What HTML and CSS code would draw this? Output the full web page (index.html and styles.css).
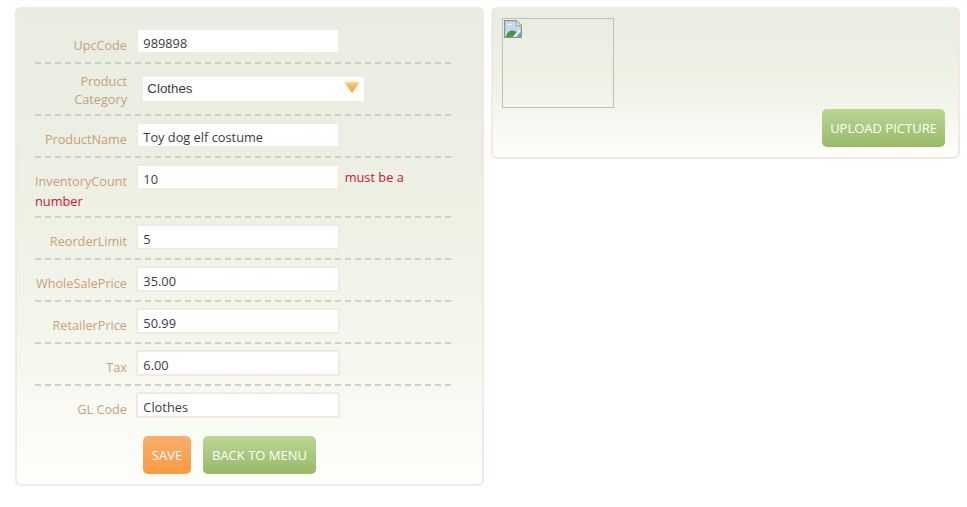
FILE: index.html
```html
<!DOCTYPE html>
<html lang="en">
<head>
  <meta charset="UTF-8">
  <title>Edit Product</title>
  <link rel="stylesheet" href="styles.css">
</head>
<body>
  <div class="page">
    <!-- product form -->
    <form class="panel form-panel">
      <div class="row">
        <label class="row-label">UpcCode</label>
        <input class="text-input" type="text" value="989898">
      </div>
      <div class="row row-select">
        <label class="row-label">Product Category</label>
        <span class="select-wrap">
          <select class="select-input">
            <option>Clothes</option>
          </select>
          <svg class="select-arrow" width="16" height="11" viewBox="0 0 16 11">
            <defs>
              <linearGradient id="arrowFill" x1="0" y1="0" x2="0" y2="1">
                <stop offset="0" stop-color="#f8dc8c"/>
                <stop offset="0.3" stop-color="#fbbf63"/>
                <stop offset="1" stop-color="#f99a41"/>
              </linearGradient>
            </defs>
            <path d="M0 0H16L8 11Z" fill="url(#arrowFill)"/>
          </svg>
        </span>
      </div>
      <div class="row">
        <label class="row-label">ProductName</label>
        <input class="text-input" type="text" value="Toy dog elf costume">
      </div>
      <div class="row">
        <label class="row-label">InventoryCount</label>
        <input class="text-input" type="text" value="10">
        <span class="field-error">must be a number</span>
      </div>
      <div class="row">
        <label class="row-label">ReorderLimit</label>
        <input class="text-input" type="text" value="5">
      </div>
      <div class="row">
        <label class="row-label">WholeSalePrice</label>
        <input class="text-input" type="text" value="35.00">
      </div>
      <div class="row">
        <label class="row-label">RetailerPrice</label>
        <input class="text-input" type="text" value="50.99">
      </div>
      <div class="row">
        <label class="row-label">Tax</label>
        <input class="text-input" type="text" value="6.00">
      </div>
      <div class="row row-last">
        <label class="row-label">GL Code</label>
        <input class="text-input" type="text" value="Clothes">
      </div>
      <div class="form-actions">
        <button class="btn btn-orange btn-save" type="button">SAVE</button>
        <button class="btn btn-green btn-back" type="button">BACK TO MENU</button>
      </div>
    </form>

    <!-- picture -->
    <div class="panel picture-panel">
      <div class="picture-box">
        <svg class="broken-image" width="18" height="18" viewBox="0 0 16 16">
          <path d="M.5.5H11L15.500 5V15.500H.5Z" fill="#c9d7f3" stroke="#8f8f8f"/>
          <path d="M11 .5V5H15.500Z" fill="#f4f4f4" stroke="#a8a8a8"/>
          <path d="M3 4.500Q5 2 7.500 4.500Z" fill="#fff"/>
          <path d="M1.500 15Q3 10 7 9L11.500 10.500L8 15Z" fill="#3f9e3a"/>
          <path d="M8 15L14 8.500V10L10 15Z" fill="#fff"/>
          <path d="M11 15L15 10.500V15Z" fill="#7f9f80"/>
        </svg>
      </div>
      <div class="picture-actions">
        <button class="btn btn-green btn-upload" type="button">UPLOAD PICTURE</button>
      </div>
    </div>
  </div>
</body>
</html>
```

FILE: styles.css
```css
/* base */
body {
  margin: 0;
  padding: 7px 7px 0 15px;
  background-color: #fff;
  font-family: "Open Sans", sans-serif;
  font-size: 12.8px;
  color: #333;
}
.page {
  display: flex;
  align-items: flex-start;
  gap: 7px;
}
/* panels */
.panel {
  box-sizing: border-box;
  width: 469px;
  border: 2px solid #f3e9e0;
  border-radius: 6px;
  background: linear-gradient(to bottom, #e8ece2 0%, #eef1e4 45%, #f3f6ec 68%, #fefefb 100%);
}
.form-panel {
  height: 479px;
  padding: 14px 31px 0 18px;
}
.picture-panel {
  height: 152px;
  padding: 9px 13px 0 9px;
}
/* form rows */
.row {
  padding: 6px 0 8px;
  border-bottom: 2px dashed #d3cfc6;
  line-height: 18px;
}
.row:first-child {
  padding-top: 5px;
}
.row-select {
  padding: 7px 0;
}
.row-last {
  border-bottom: none;
  padding-bottom: 0;
}
.row-label {
  display: inline-block;
  position: relative;
  top: 6px;
  width: 92px;
  margin-right: 6px;
  text-align: right;
  font-size: 12.7px;
  color: #c99f76;
}
.row-select .row-label {
  top: 1px;
  vertical-align: middle;
}
.text-input {
  box-sizing: border-box;
  width: 204px;
  height: 26px;
  padding: 4px 5px 0;
  border: 2px solid #f3e9e0;
  border-radius: 2px;
  background-color: #fff;
  font-family: "Open Sans", sans-serif;
  font-size: 12.8px;
  color: #3c3c3c;
  vertical-align: middle;
}
.field-error {
  position: relative;
  top: 2px;
  margin-left: 1px;
  color: #d4122e;
}
/* select with custom arrow */
.select-wrap {
  display: inline-block;
  position: relative;
  margin-left: 6px;
  vertical-align: middle;
}
.select-input {
  display: block;
  box-sizing: border-box;
  width: 223px;
  height: 26px;
  padding: 0 4px 2px;
  border: 1px solid #f3e9e0;
  background-color: #fff;
  appearance: none;
  font-family: "Liberation Sans", sans-serif;
  font-size: 13.33px;
  color: #3c3c3c;
}
.select-arrow {
  position: absolute;
  top: 6px;
  right: 5px;
}
/* buttons */
.btn {
  box-sizing: border-box;
  height: 38px;
  padding: 0;
  border: none;
  border-radius: 5px;
  font-family: "Open Sans", sans-serif;
  font-size: 13px;
  color: #fff;
}
.btn-orange {
  background: linear-gradient(to bottom, #f9ae6d, #fa9a3f);
}
.btn-green {
  background: linear-gradient(to bottom, #bbd792, #97b968);
}
.btn-save {
  width: 48px;
}
.btn-back {
  width: 113px;
}
.btn-upload {
  width: 123px;
}
.form-actions {
  display: flex;
  gap: 12px;
  margin-top: 18px;
  padding-left: 108px;
}
/* picture box */
.picture-box {
  box-sizing: border-box;
  width: 112px;
  height: 90px;
  padding: 1px;
  border: 1px solid #bdc1b8;
}
.broken-image {
  display: block;
}
.picture-actions {
  display: flex;
  justify-content: flex-end;
  margin-top: 1px;
}
```
